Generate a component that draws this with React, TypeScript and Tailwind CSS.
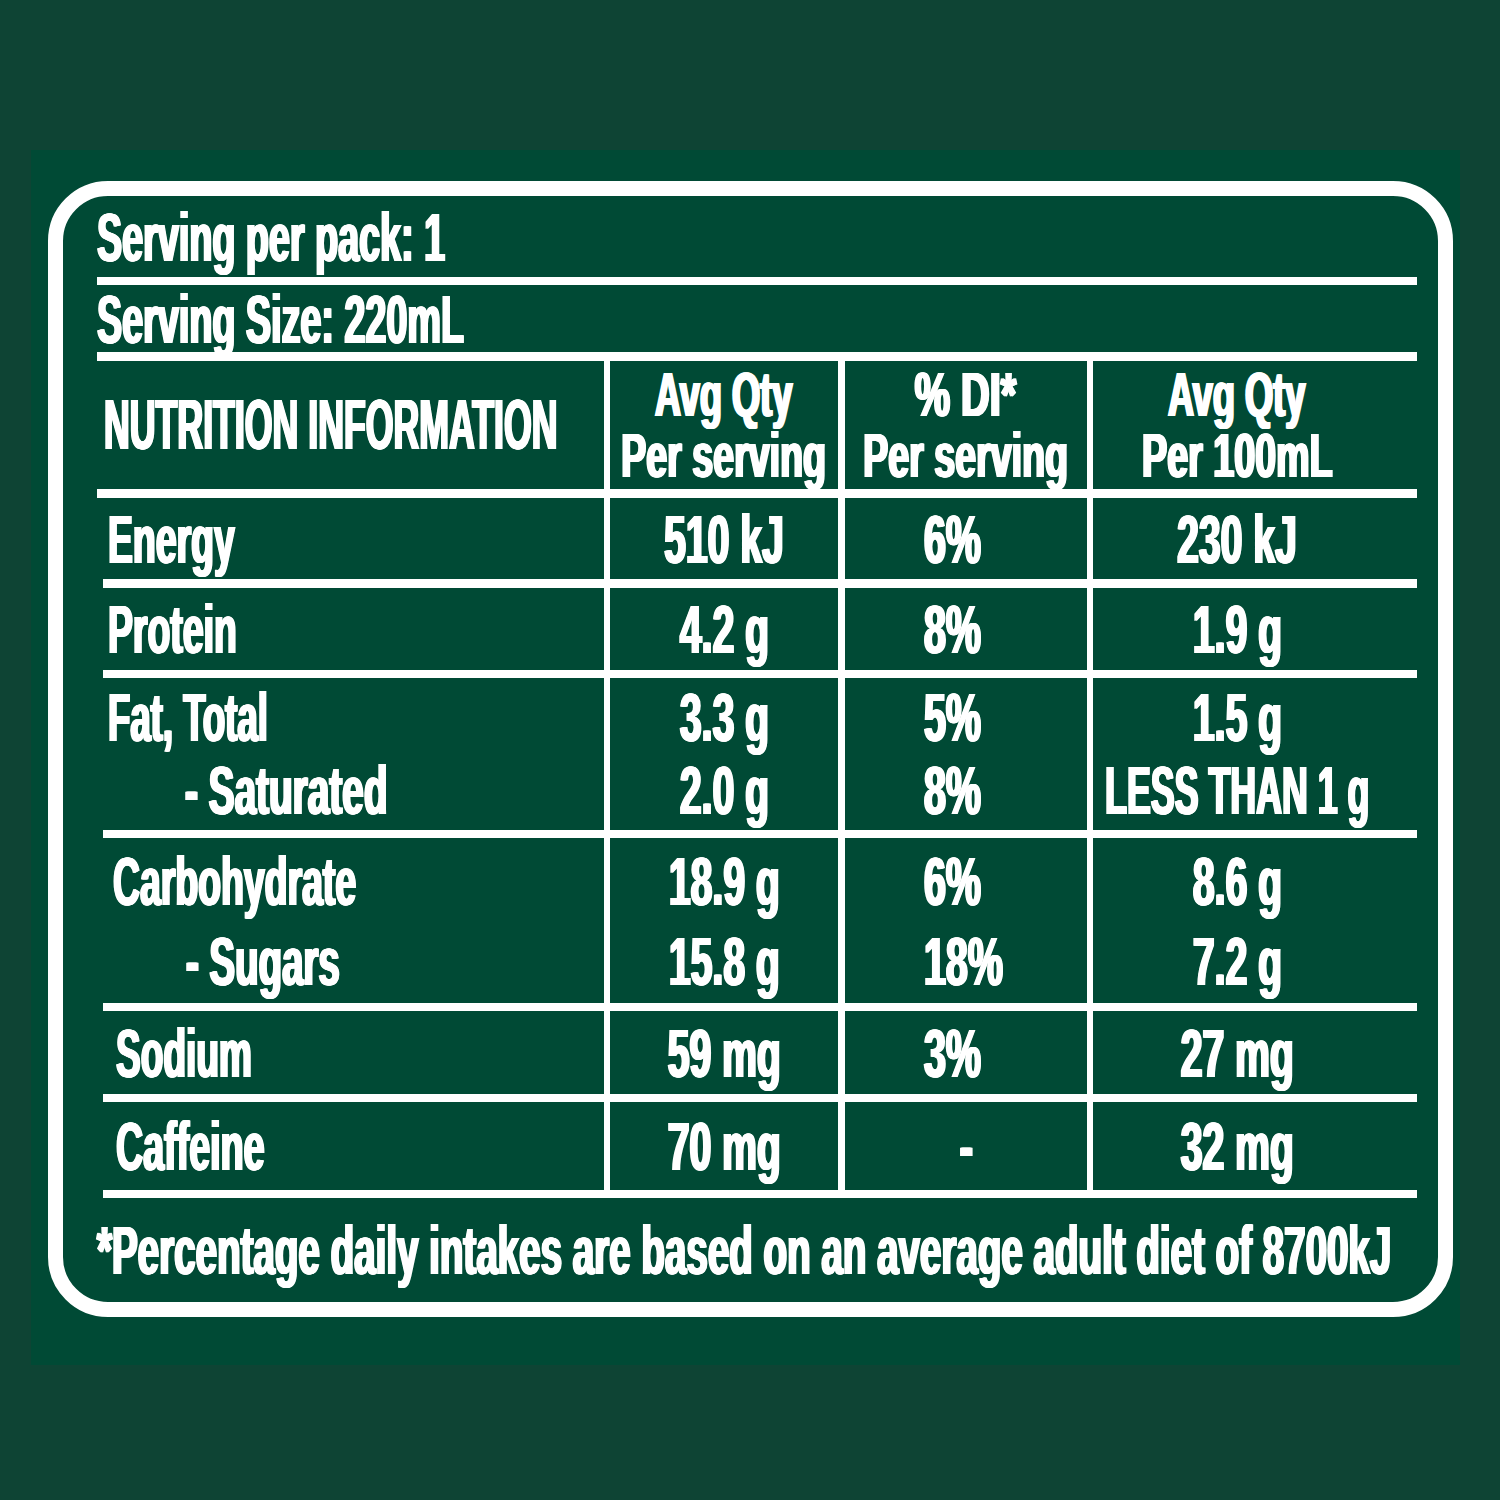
import React from "react";

// condensed look: Liberation Sans Bold squeezed horizontally, slightly thickened with side shadows
const T = ({ c, children }: { c: string; children: React.ReactNode }) => (
    <span className={`inline-block whitespace-nowrap ${c}`}>{children}</span>
);

type RowProps = {
    h: string;
    lead: string;
    pl: string;
    labels: React.ReactNode;
    a: string[];
    b: string[];
    c: string[];
    center?: boolean;
};

const Row = ({ h, lead, pl, labels, a, b, c, center }: RowProps) => (
    <div className={`grid grid-cols-[507px_234px_249px_330px] ${h} ${lead}`}>
        <div className={`flex flex-col justify-center items-start ${pl}`}>{labels}</div>
        <div className="flex flex-col justify-center items-center border-l-[6px] border-white">
            {a.map((v, i) => (
                <T key={i} c="scale-x-[0.575]">{v}</T>
            ))}
        </div>
        <div
            className={`flex flex-col justify-center border-l-[7px] border-white ${
                center ? "items-center" : "items-start pl-[79px]"
            }`}>
            {b.map((v, i) => (
                <T key={i} c={center ? "scale-x-[0.58]" : "origin-left scale-x-[0.58]"}>{v}</T>
            ))}
        </div>
        <div className="flex flex-col justify-center items-center border-l-[6px] border-white pr-[36px]">
            {c.map((v, i) =>
                v.startsWith("LESS") ? (
                    <T key={i} c="scale-x-[0.526]">{v}</T>
                ) : (
                    <T key={i} c="scale-x-[0.575]">{v}</T>
                )
            )}
        </div>
    </div>
);

const Rule = ({ c }: { c: string }) => <div className={`bg-white ${c}`} />;

const App = () => {
    return (
        <div className="w-[1500px] h-[1500px] bg-[#0e4434] pt-[150px] pl-[31px] font-['Liberation_Sans',Arial,sans-serif] font-bold text-white [text-shadow:1px_0_#fff,-1px_0_#fff,2px_0_#fff,-2px_0_#fff]">
            <div className="w-[1429px] h-[1215px] bg-[#004a35] pt-[31px] pl-[17px]">
                <div className="w-[1405px] h-[1136px] border-[15px] border-white rounded-[60px] pl-[34px] pr-[21px] flex flex-col text-[68px] leading-none">
                    <div className="h-[81px] shrink-0 flex items-center">
                        <T c="origin-left scale-x-[0.555]">Serving per pack: 1</T>
                    </div>
                    <Rule c="h-[8px] shrink-0" />
                    <div className="h-[67px] shrink-0 flex items-center">
                        <T c="origin-left scale-x-[0.555]">Serving Size: 220mL</T>
                    </div>
                    <Rule c="h-[9px] shrink-0" />

                    {/* header */}
                    <div className="grid grid-cols-[507px_234px_249px_330px] h-[128px] shrink-0 text-[63px] leading-[61px]">
                        <div className="flex items-center pl-[7px]">
                            <T c="origin-left text-[70px] leading-none scale-x-[0.51]">NUTRITION INFORMATION</T>
                        </div>
                        <div className="flex flex-col justify-center items-center border-l-[6px] border-white">
                            <T c="scale-x-[0.575]">Avg Qty</T>
                            <T c="scale-x-[0.597]">Per serving</T>
                        </div>
                        <div className="flex flex-col justify-center items-center border-l-[7px] border-white">
                            <T c="scale-x-[0.63]">% DI*</T>
                            <T c="scale-x-[0.597]">Per serving</T>
                        </div>
                        <div className="flex flex-col justify-center items-center border-l-[6px] border-white pr-[36px]">
                            <T c="scale-x-[0.575]">Avg Qty</T>
                            <T c="scale-x-[0.598]">Per 100mL</T>
                        </div>
                    </div>
                    <Rule c="h-[9px] shrink-0" />

                    <Row
                        h="h-[81px] shrink-0"
                        lead="leading-none"
                        pl="pl-[11px]"
                        labels={<T c="origin-left scale-x-[0.55]">Energy</T>}
                        a={["510 kJ"]}
                        b={["6%"]}
                        c={["230 kJ"]}
                    />
                    <Rule c="h-[9px] shrink-0 ml-[6px]" />
                    <Row
                        h="h-[82px] shrink-0"
                        lead="leading-none"
                        pl="pl-[11px]"
                        labels={<T c="origin-left scale-x-[0.55]">Protein</T>}
                        a={["4.2 g"]}
                        b={["8%"]}
                        c={["1.9 g"]}
                    />
                    <Rule c="h-[8px] shrink-0 ml-[6px]" />
                    <Row
                        h="h-[152px] shrink-0"
                        lead="leading-[73px]"
                        pl="pl-[11px]"
                        labels={
                            <>
                                <T c="origin-left scale-x-[0.538]">Fat, Total</T>
                                <T c="origin-left ml-[77px] scale-x-[0.57]">- Saturated</T>
                            </>
                        }
                        a={["3.3 g", "2.0 g"]}
                        b={["5%", "8%"]}
                        c={["1.5 g", "LESS THAN 1 g"]}
                    />
                    <Rule c="h-[8px] shrink-0 ml-[6px]" />
                    <Row
                        h="h-[165px] shrink-0"
                        lead="leading-[80px]"
                        pl="pl-[16px]"
                        labels={
                            <>
                                <T c="origin-left scale-x-[0.55]">Carbohydrate</T>
                                <T c="origin-left ml-[73px] scale-x-[0.565]">- Sugars</T>
                            </>
                        }
                        a={["18.9 g", "15.8 g"]}
                        b={["6%", "18%"]}
                        c={["8.6 g", "7.2 g"]}
                    />
                    <Rule c="h-[8px] shrink-0 ml-[6px]" />
                    <Row
                        h="h-[83px] shrink-0"
                        lead="leading-none"
                        pl="pl-[19px]"
                        labels={<T c="origin-left scale-x-[0.545]">Sodium</T>}
                        a={["59 mg"]}
                        b={["3%"]}
                        c={["27 mg"]}
                    />
                    <Rule c="h-[8px] shrink-0 ml-[6px]" />
                    <Row
                        h="h-[88px] shrink-0"
                        lead="leading-none"
                        pl="pl-[19px]"
                        labels={<T c="origin-left scale-x-[0.554]">Caffeine</T>}
                        a={["70 mg"]}
                        b={["-"]}
                        c={["32 mg"]}
                        center
                    />
                    <Rule c="h-[8px] shrink-0 ml-[6px]" />

                    <div className="h-[104px] shrink-0 flex items-center">
                        <T c="origin-left scale-x-[0.567]">
                            *Percentage daily intakes are based on an average adult diet of 8700kJ
                        </T>
                    </div>
                </div>
            </div>
        </div>
    );
};

export default App;
